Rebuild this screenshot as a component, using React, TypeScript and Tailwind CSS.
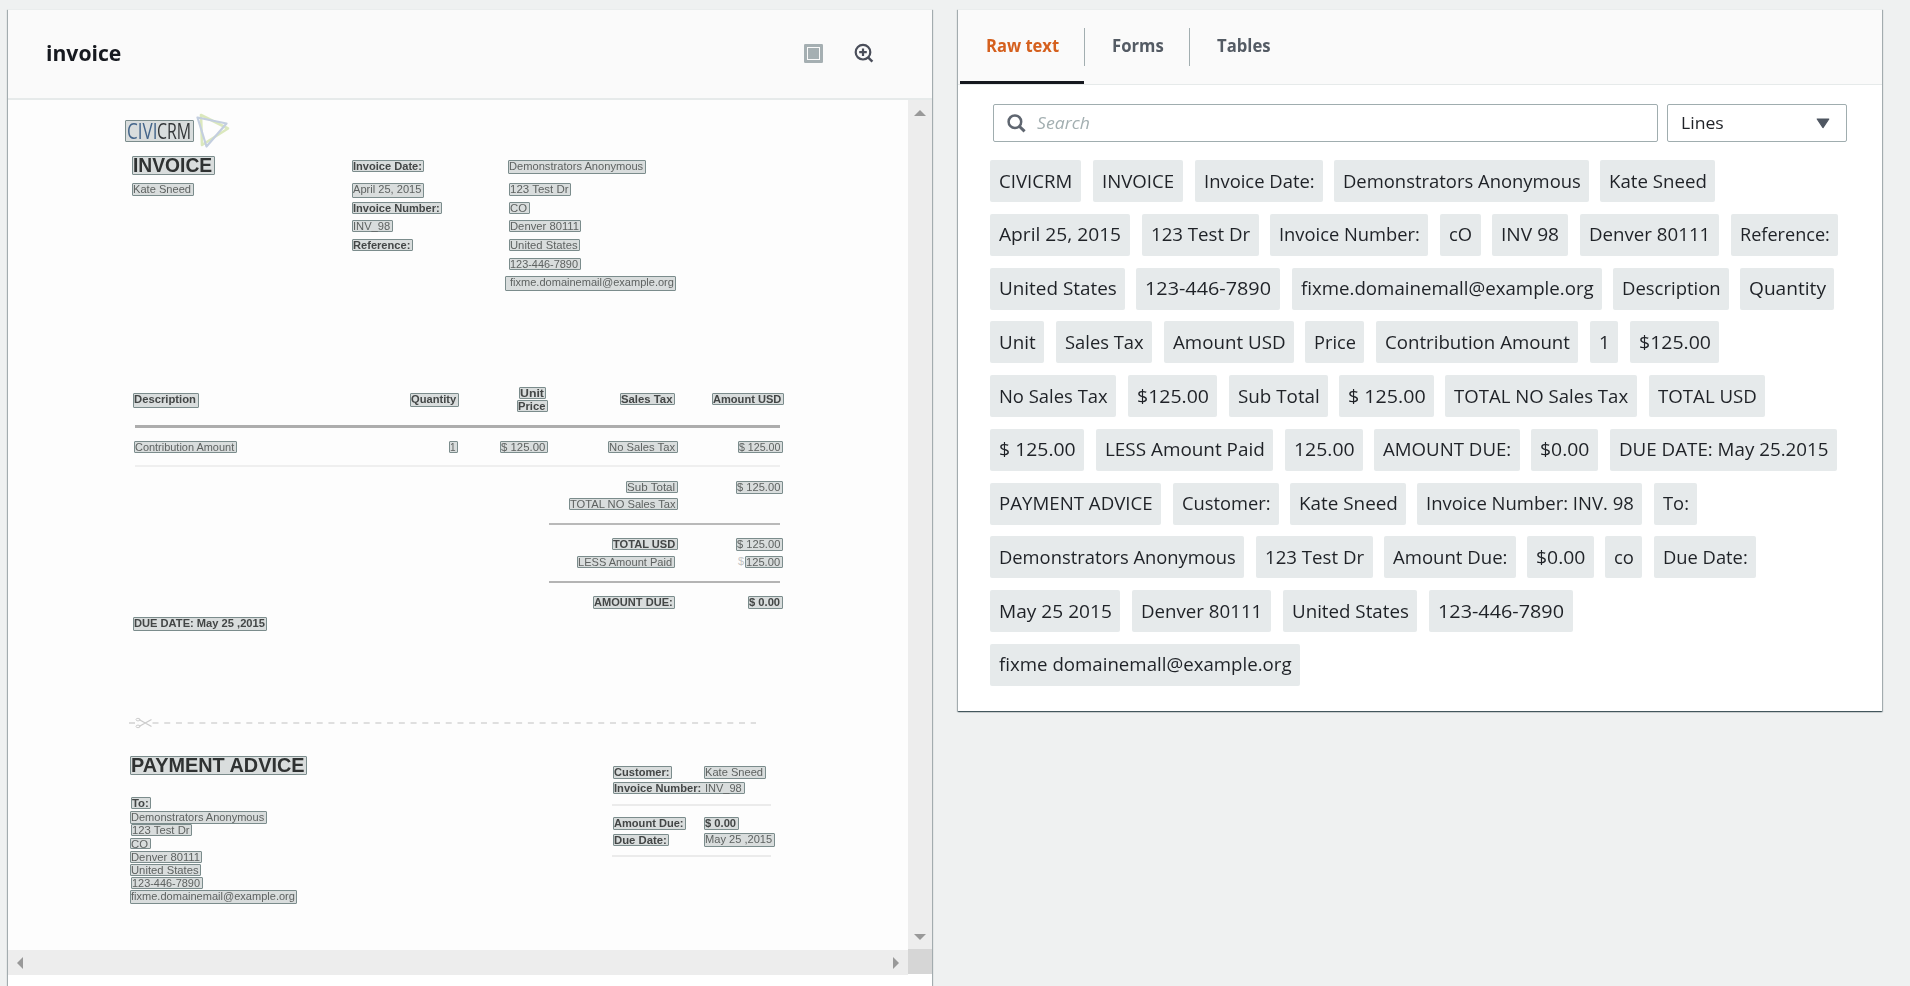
import { useLayoutEffect, useRef, useState } from "react";

/** Text stretched horizontally so that it fills exactly `width` pixels. */
function FitText({ text, width, className = "" }: { text: string; width: number; className?: string }) {
  const ref = useRef<HTMLSpanElement>(null);
  const [scale, setScale] = useState(1);
  useLayoutEffect(() => {
    if (ref.current) setScale(width / ref.current.offsetWidth);
  }, [width]);
  return (
    <span className="block" style={{ width }}>
      <span className="block w-max origin-left" style={{ transform: `scaleX(${scale})` }}>
        <span ref={ref} className={`block w-max whitespace-pre ${className}`}>
          {text}
        </span>
      </span>
    </span>
  );
}

type Box = {
  t: string;
  r: [number, number, number, number];
  k?: "bold" | "title" | "logo" | "mixed";
  pad?: number;
};

const ORIGIN_X = 8;
const ORIGIN_Y = 100;

const boxes: Box[] = [
  { t: "CIVICRM", r: [125, 120, 194, 142], k: "logo" },
  { t: "INVOICE", r: [132, 156, 215, 175], k: "title" },
  { t: "Kate Sneed", r: [132, 183, 194, 196] },
  { t: "Invoice Date:", r: [352, 160, 424, 172], k: "bold" },
  { t: "April 25, 2015", r: [352, 183, 424, 198] },
  { t: "Invoice Number:", r: [352, 202, 442, 214], k: "bold" },
  { t: "INV_98", r: [352, 220, 393, 232] },
  { t: "Reference:", r: [352, 239, 413, 251], k: "bold" },
  { t: "Demonstrators Anonymous", r: [508, 160, 646, 174] },
  { t: "123 Test Dr", r: [509, 183, 571, 196] },
  { t: "CO", r: [509, 202, 530, 214] },
  { t: "Denver 80111", r: [509, 220, 581, 232] },
  { t: "United States", r: [509, 239, 580, 251] },
  { t: "123-446-7890", r: [509, 258, 581, 270] },
  { t: "fixme.domainemail@example.org", r: [505, 276, 676, 291], pad: 4 },
  { t: "Description", r: [133, 393, 199, 408], k: "bold" },
  { t: "Quantity", r: [410, 393, 459, 407], k: "bold" },
  { t: "Unit", r: [519, 387, 546, 399], k: "bold" },
  { t: "Price", r: [517, 400, 548, 412], k: "bold" },
  { t: "Sales Tax", r: [620, 393, 675, 405], k: "bold" },
  { t: "Amount USD", r: [712, 393, 784, 405], k: "bold" },
  { t: "Contribution Amount", r: [134, 441, 237, 453] },
  { t: "1", r: [449, 441, 458, 453] },
  { t: "$ 125.00", r: [500, 441, 548, 453] },
  { t: "No Sales Tax", r: [608, 441, 678, 453] },
  { t: "$ 125.00", r: [738, 441, 783, 453] },
  { t: "Sub Total", r: [626, 481, 678, 493] },
  { t: "$ 125.00", r: [736, 481, 783, 494] },
  { t: "TOTAL NO Sales Tax", r: [569, 498, 678, 510] },
  { t: "TOTAL USD", r: [612, 538, 678, 550], k: "bold" },
  { t: "$ 125.00", r: [736, 538, 783, 551] },
  { t: "LESS Amount Paid", r: [577, 556, 675, 568] },
  { t: "125.00", r: [745, 556, 783, 568] },
  { t: "AMOUNT DUE:", r: [593, 596, 675, 609], k: "bold" },
  { t: "$ 0.00", r: [748, 596, 783, 609], k: "bold" },
  { t: "DUE DATE: May 25 ,2015", r: [133, 617, 267, 631], k: "bold" },
  { t: "PAYMENT ADVICE", r: [130, 756, 307, 775], k: "title" },
  { t: "To:", r: [131, 797, 151, 809], k: "bold" },
  { t: "Demonstrators Anonymous", r: [130, 811, 267, 824] },
  { t: "123 Test Dr", r: [131, 824, 192, 836] },
  { t: "CO", r: [130, 838, 151, 849] },
  { t: "Denver 80111", r: [130, 851, 202, 863] },
  { t: "United States", r: [130, 864, 201, 876] },
  { t: "123-446-7890", r: [131, 877, 203, 889] },
  { t: "fixme.domainemail@example.org", r: [130, 890, 297, 904] },
  { t: "Customer:", r: [613, 766, 672, 779], k: "bold" },
  { t: "Kate Sneed", r: [704, 766, 766, 779] },
  { t: "Invoice Number:", r: [613, 782, 745, 794], k: "mixed" },
  { t: "Amount Due:", r: [613, 817, 686, 830], k: "bold" },
  { t: "$ 0.00", r: [704, 817, 739, 830], k: "bold" },
  { t: "Due Date:", r: [613, 834, 669, 846], k: "bold" },
  { t: "May 25 ,2015", r: [704, 833, 775, 847] },
];

const rules: [number, number, number, string][] = [
  [135, 780, 426, "h-[2.5px] bg-[#adadad]"],
  [135, 780, 466, "h-[2px] bg-[#efefef]"],
  [549, 780, 524, "h-[2px] bg-[#b9b9b9]"],
  [549, 780, 581.6, "h-[2px] bg-[#b4b4b4]"],
  [612, 771, 805, "h-[2px] bg-[#ebebeb]"],
  [612, 771, 856.3, "h-[2px] bg-[#ebebeb]"],
];

const plain = "font-['Liberation_Sans',sans-serif] text-[11px] leading-[12px] text-[#5e6261]";
const bold = "font-['Liberation_Sans',sans-serif] text-[11px] leading-[12px] font-bold text-[#434646]";

function BoxText({ box }: { box: Box }) {
  const w = box.r[2] - box.r[0];
  const pad = box.pad ?? 0;
  if (box.k === "logo") {
    return (
      <div className="flex pl-px font-['Open_Sans',sans-serif] text-[21px] leading-[20px]">
        <FitText text="CIVI" width={30} className="font-medium text-[#44658a]" />
        <FitText text="CRM" width={34} className="font-medium text-[#333638]" />
      </div>
    );
  }
  if (box.k === "title") {
    return (
      <FitText
        text={box.t}
        width={w - 4}
        className="font-['Liberation_Sans',sans-serif] text-[19.5px] leading-[17px] font-bold text-[#2f3232]"
      />
    );
  }
  if (box.k === "mixed") {
    return (
      <div className="-mt-px flex gap-[4px]">
        <FitText text={box.t} width={87} className={bold} />
        <FitText text="INV_98" width={37} className={plain} />
      </div>
    );
  }
  return (
    <div className="-mt-px" style={{ paddingLeft: pad }}>
      <FitText text={box.t} width={w - 3.5 - pad} className={box.k === "bold" ? bold : plain} />
    </div>
  );
}

function InvoiceDocument() {
  return (
    <div className="relative h-[850px] w-[900px] overflow-hidden bg-[#fdfdfd]">
      {boxes.map((b, i) => (
        <div
          key={i}
          className="absolute rounded-[1px] border border-[#7b8c8c] bg-[#d9dddd]"
          style={{
            left: b.r[0] - ORIGIN_X,
            top: b.r[1] - ORIGIN_Y,
            width: b.r[2] - b.r[0],
            height: b.r[3] - b.r[1],
          }}
        >
          <div className="flow-root blur-[0.3px]">
            <BoxText box={b} />
          </div>
        </div>
      ))}
      {rules.map(([x1, x2, y, cls], i) => (
        <div
          key={i}
          className={`absolute blur-[0.4px] ${cls}`}
          style={{ left: x1 - ORIGIN_X, top: y - 1 - ORIGIN_Y, width: x2 - x1 }}
        />
      ))}
      <span className="absolute top-[455px] left-[730px] font-['Liberation_Sans',sans-serif] text-[11px] leading-[13px] text-[#c4c4c4]">
        $
      </span>
      <svg className="absolute top-[10px] left-[184px] blur-[0.5px]" width="42" height="42" viewBox="0 0 42 42" fill="none">
        <path d="M9 5 L36 18.5 L10 35 Z" stroke="#dbe8bd" strokeWidth="2.6" strokeLinejoin="round" />
        <path d="M5.5 7.5 L34.5 13.5 L14.5 36.5 Z" stroke="#c3cedf" strokeWidth="2.2" strokeLinejoin="round" />
      </svg>
      <svg className="absolute top-[614px] left-[120px] blur-[0.3px]" width="640" height="18" viewBox="0 0 640 18" fill="none">
        <path d="M1 9H7" stroke="#dcdcdc" strokeWidth="2" />
        <path d="M24.5 9H628" stroke="#dfdfdf" strokeWidth="2" strokeDasharray="6 5.73" />
        <path d="M11 5.5L23.5 12.5M11 12.5L23.5 5.5" stroke="#cccccc" strokeWidth="1.4" />
        <ellipse cx="10" cy="5.6" rx="2" ry="1.3" stroke="#cccccc" />
        <ellipse cx="10" cy="12.4" rx="2" ry="1.3" stroke="#cccccc" />
      </svg>
    </div>
  );
}

const lines: [string, number, number][][] = [
  [["CIVICRM", 990, 1081], ["INVOICE", 1093, 1183], ["Invoice Date:", 1195, 1323], ["Demonstrators Anonymous", 1334, 1589], ["Kate Sneed", 1600, 1715]],
  [["April 25, 2015", 990, 1130], ["123 Test Dr", 1142, 1259], ["Invoice Number:", 1270, 1428], ["cO", 1440, 1481], ["INV 98", 1492, 1568], ["Denver 80111", 1580, 1719], ["Reference:", 1731, 1838]],
  [["United States", 990, 1125], ["123-446-7890", 1136, 1280], ["fixme.domainemall@example.org", 1292, 1602], ["Description", 1613, 1729], ["Quantity", 1740, 1834]],
  [["Unit", 990, 1044], ["Sales Tax", 1056, 1152], ["Amount USD", 1164, 1294], ["Price", 1305, 1364], ["Contribution Amount", 1376, 1578], ["1", 1590, 1618], ["$125.00", 1630, 1719]],
  [["No Sales Tax", 990, 1116], ["$125.00", 1128, 1217], ["Sub Total", 1229, 1328], ["$ 125.00", 1339, 1434], ["TOTAL NO Sales Tax", 1445, 1637], ["TOTAL USD", 1649, 1765]],
  [["$ 125.00", 990, 1084], ["LESS Amount Paid", 1096, 1273], ["125.00", 1285, 1363], ["AMOUNT DUE:", 1374, 1520], ["$0.00", 1531, 1598], ["DUE DATE: May 25.2015", 1610, 1837]],
  [["PAYMENT ADVICE", 990, 1161], ["Customer:", 1173, 1279], ["Kate Sneed", 1290, 1406], ["Invoice Number: INV. 98", 1417, 1642], ["To:", 1654, 1697]],
  [["Demonstrators Anonymous", 990, 1244], ["123 Test Dr", 1256, 1373], ["Amount Due:", 1384, 1516], ["$0.00", 1527, 1594], ["co", 1605, 1642], ["Due Date:", 1654, 1756]],
  [["May 25 2015", 990, 1120], ["Denver 80111", 1132, 1271], ["United States", 1283, 1417], ["123-446-7890", 1429, 1573]],
  [["fixme domainemall@example.org", 990, 1300]],
];

function Chips() {
  return (
    <div className="flex flex-col gap-[11.77px] pl-[32px]">
      {lines.map((row, i) => (
        <div key={i} className="flex h-[42px]">
          {row.map(([text, x1, x2], j) => (
            <div
              key={j}
              className="h-full shrink-0 rounded-[2px] bg-[#e6eaeb] pt-[7.6px] pl-[8.5px]"
              style={{ width: x2 - x1, marginLeft: j ? x1 - row[j - 1][2] : 0 }}
            >
              <FitText text={text} width={x2 - x1 - 17.5} className="text-[18px] leading-[26px] text-[#1f2227]" />
            </div>
          ))}
        </div>
      ))}
    </div>
  );
}

const panel =
  "border-t border-[#eaeded] shadow-[0_1px_1px_0_rgba(0,28,36,0.5),1px_1px_1px_0_rgba(0,28,36,0.25),-1px_1px_1px_0_rgba(0,28,36,0.25)]";

function Panels() {
  return (
    <div className="flex h-[986px] w-[1910px] items-start gap-[26px] overflow-hidden bg-[#eff1f1] pt-[9px] pl-[8px] font-['Open_Sans',sans-serif]">
      <section className={`h-[990px] w-[924px] shrink-0 bg-white ${panel}`}>
        <header className="flex h-[90px] items-center border-b-2 border-[#e6eaea] bg-[#fafafa] pr-[58px] pl-[38px]">
          <h2 className="flex-1 pb-[4px]">
            <FitText text="invoice" width={75} className="text-[22px] leading-[30px] font-bold text-[#16191f]" />
          </h2>
          <svg width="19" height="19" viewBox="0 0 19 19" className="mr-[30px] mb-[2px]">
            <rect width="19" height="19" rx="1.2" fill="#a5afb2" />
            <rect x="3.5" y="3.5" width="12" height="12" fill="#a5afb2" stroke="#fafafa" strokeWidth="1" />
          </svg>
          <svg width="21" height="21" viewBox="0 0 21 21" fill="none" stroke="#4a4e5a" className="mb-px">
            <circle cx="10" cy="9.2" r="7.3" strokeWidth="2.2" />
            <path d="M10 5.4V13M6.2 9.2H13.8" strokeWidth="2.2" />
            <path d="M14.8 14.2L19.4 18.6" strokeWidth="2.5" />
          </svg>
        </header>
        <div className="flex h-[850px]">
          <InvoiceDocument />
          <div className="flex h-[849px] w-[24px] flex-col items-center justify-between bg-[#ededed] pt-[10px] pb-[9px]">
            <svg width="12" height="6" viewBox="0 0 12 6">
              <path d="M0 6L6 0L12 6Z" fill="#999" />
            </svg>
            <svg width="12" height="6" viewBox="0 0 12 6">
              <path d="M0 0L6 6L12 0Z" fill="#999" />
            </svg>
          </div>
        </div>
        <div className="flex h-[25px]">
          <div className="flex w-[900px] items-center justify-between bg-[#ededed] pr-[9px] pl-[9px]">
            <svg width="6" height="12" viewBox="0 0 6 12">
              <path d="M6 0L0 6L6 12Z" fill="#999" />
            </svg>
            <svg width="6" height="12" viewBox="0 0 6 12">
              <path d="M0 0L6 6L0 12Z" fill="#999" />
            </svg>
          </div>
          <div className="-mt-px h-[25px] w-[24px] bg-[#d6d6d6]" />
        </div>
      </section>

      <section className={`h-[702px] w-[924px] shrink-0 bg-white ${panel}`}>
        <nav className="flex h-[75px] border-b border-[#e6eaea] bg-[#fafafa] pl-[2px] text-[17px] leading-[24px] font-bold text-[#545b64]">
          <div className="h-[74px] w-[124px] border-b-[3px] border-[#16191f] pt-[24px] pl-[26px] text-[#d5601e]">
            <FitText text="Raw text" width={73} />
          </div>
          <div className="mt-[18px] h-[38px] w-[105px] border-l border-[#a2aeb0] pt-[6px] pl-[27px]">
            <FitText text="Forms" width={52} />
          </div>
          <div className="mt-[18px] h-[38px] border-l border-[#a2aeb0] pt-[6px] pl-[27px]">
            <FitText text="Tables" width={54} />
          </div>
        </nav>
        <div className="flex gap-[9px] pt-[19px] pb-[18px] pl-[35px] text-[17px] leading-[24px]">
          <div className="flex h-[38px] w-[665px] items-center rounded-[2px] border border-[#a0adaf] bg-white pl-[13px]">
            <svg width="19" height="19" viewBox="0 0 19 19" fill="none" stroke="#5f6670">
              <circle cx="7.9" cy="7.7" r="6.3" strokeWidth="2.5" />
              <path d="M12.3 12.2L17.6 17.4" strokeWidth="3" />
            </svg>
            <div className="pl-[11px] italic">
              <FitText text="Search" width={53} className="text-[#a3afb1]" />
            </div>
          </div>
          <div className="flex h-[38px] w-[180px] items-center justify-between rounded-[2px] border border-[#a0adaf] bg-white pr-[16px] pl-[12.5px]">
            <FitText text="Lines" width={42.5} className="text-[#1f2227]" />
            <svg width="14" height="11" viewBox="0 0 14 11">
              <path d="M1.2 1H12.8L7 9.6Z" fill="#4f5661" stroke="#4f5661" strokeWidth="1.2" strokeLinejoin="round" />
            </svg>
          </div>
        </div>
        <Chips />
      </section>
    </div>
  );
}

export default function App() {
  return <Panels />;
}
